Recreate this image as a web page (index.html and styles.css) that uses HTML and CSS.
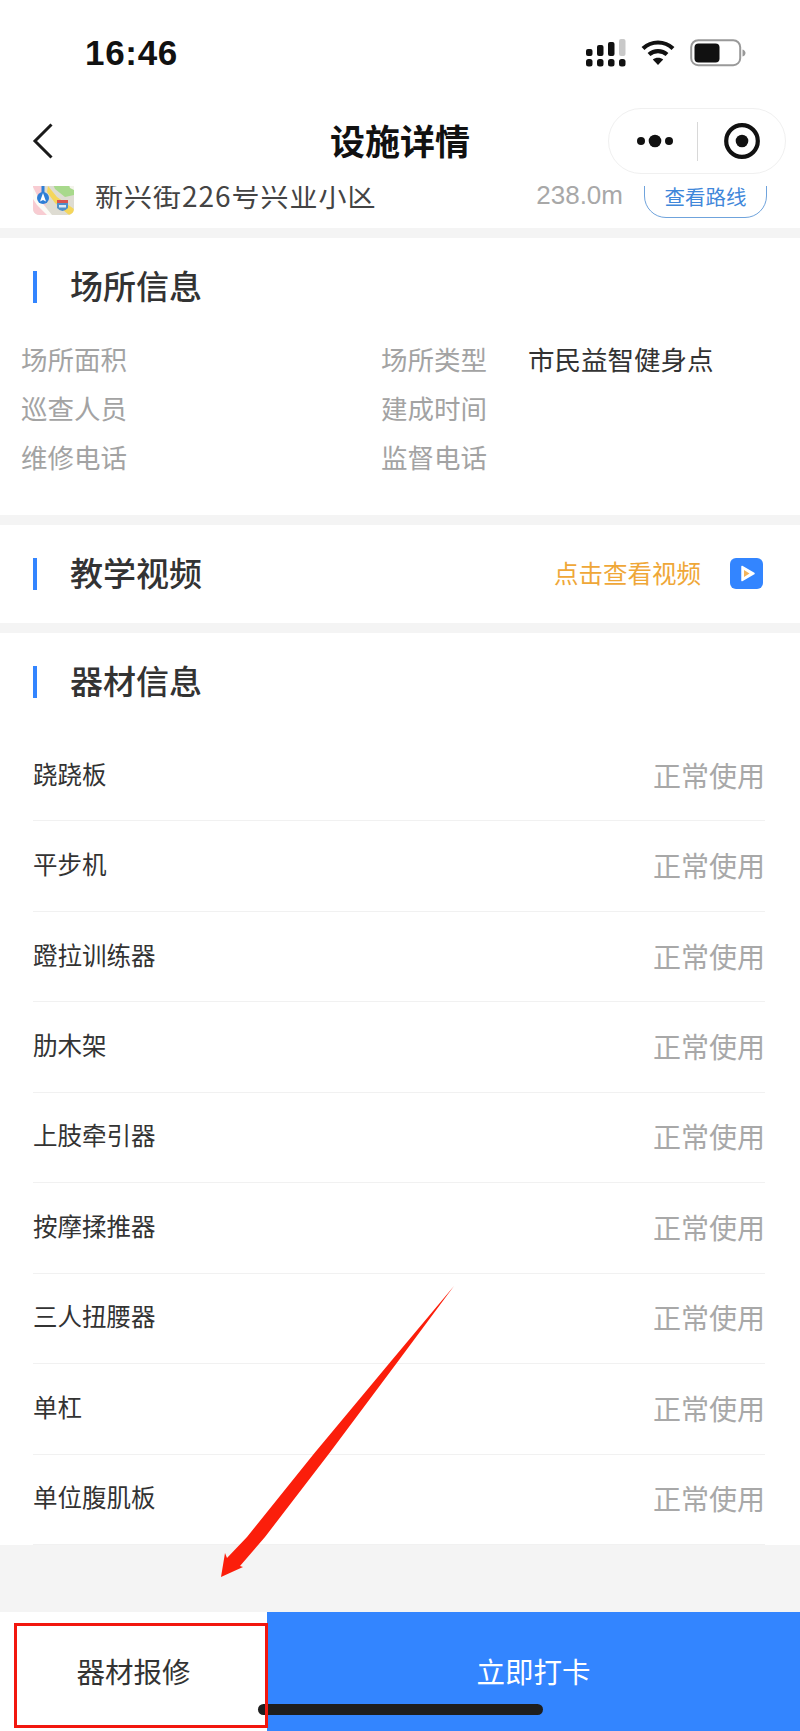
FILE: index.html
```html
<!DOCTYPE html>
<html lang="zh">
<head>
<meta charset="utf-8">
<title>设施详情</title>
<link rel="stylesheet" href="styles.css">
</head>
<body>
<div class="page">
  <header class="top">
    <div class="status">
      <span class="time">16:46</span>
      <div class="status-icons">
        <svg class="signal" width="40" height="28" viewBox="0 0 40 28"><g fill="#111"><rect x="0" y="10" width="6.500" height="7" rx="2"/><rect x="11" y="6" width="6.500" height="11" rx="2"/><rect x="22" y="3" width="6.500" height="14" rx="2"/><rect x="33" y="0" width="6.500" height="17" rx="2" fill="#c9c9c9"/><rect x="0" y="20" width="6.500" height="7.500" rx="2.500"/><rect x="11" y="20" width="6.500" height="7.500" rx="2.500"/><rect x="22" y="20" width="6.500" height="7.500" rx="2.500"/><rect x="33" y="20" width="6.500" height="7.500" rx="2.500"/></g></svg>
        <svg class="wifi" width="34" height="26" viewBox="0 0 34 26"><g fill="none" stroke="#111" stroke-width="4.200"><path d="M2 9.500C10.500 1.500 23.500 1.500 32 9.500"/><path d="M8 15.500C13 11 21 11 26 15.500"/></g><path d="M11.800 20.500C14.500 18 19.500 18 22.200 20.500L17 26Z" fill="#111"/></svg>
        <svg class="battery" width="56" height="28" viewBox="0 0 56 28"><rect x="1.200" y="1.200" width="49" height="25" rx="7" fill="#fff" stroke="#999" stroke-width="2"/><rect x="4.500" y="4.500" width="25" height="19" rx="4" fill="#111"/><path d="M52.500 10.500C54.500 11 55.500 12.500 55.500 14C55.500 15.500 54.500 17 52.500 17.500Z" fill="#999"/></svg>
      </div>
    </div>
    <nav class="nav">
      <svg class="back" width="22" height="36" viewBox="0 0 22 36"><path d="M19.500 1.500L3 18L19.500 34.500" fill="none" stroke="#1a1a1a" stroke-width="3"/></svg>
      <h1 class="nav-title">设施详情</h1>
      <div class="capsule">
        <svg width="38" height="14" viewBox="0 0 38 14"><g fill="#111"><circle cx="5" cy="7" r="4"/><circle cx="19" cy="7" r="6.300"/><circle cx="33" cy="7" r="4"/></g></svg>
        <span class="capsule-line"></span>
        <svg width="38" height="38" viewBox="0 0 38 38"><circle cx="19" cy="19" r="15.800" fill="none" stroke="#111" stroke-width="4.200"/><circle cx="19" cy="19" r="6.300" fill="#111"/></svg>
      </div>
    </nav>
  </header>

  <div class="address">
    <svg class="map-icon" width="41" height="40" viewBox="0 0 41 40">
      <defs><clipPath id="mapclip"><path d="M0 0H41V33Q41 40 34 40H7Q0 40 0 33Z"/></clipPath></defs>
      <g clip-path="url(#mapclip)">
        <rect width="41" height="40" fill="#dedcd2"/>
        <path d="M0 0H6L15 40H0Z" fill="#f8ccd2"/>
        <path d="M16 0H41V20L32 22L22 14Z" fill="#a8d98c"/>
        <path d="M33 0H41V15L37 13Z" fill="#f4f4ec"/>
        <path d="M0 12L6 24L19 40H14L4 30L0 24Z" fill="#fbfbf6"/>
        <path d="M15 11L24 22L41 34V40H36L22 28L14 17Z" fill="#f5d65b"/>
        <rect x="8.500" y="0" width="3" height="20" fill="#2f7fd6"/>
        <circle cx="10" cy="23" r="6" fill="#2f7fd6"/>
        <path d="M10 18L13 26.500L10 25L7 26.500Z" fill="#fff"/>
        <path d="M24 25H35V33Q29.500 39 24 33Z" fill="#4f8fc9"/>
        <rect x="24" y="25" width="11" height="3" fill="#d9534f"/>
        <rect x="26" y="30" width="7" height="2.500" fill="#dfeaf5"/>
      </g>
    </svg>
    <span class="addr-text">新兴街226号兴业小区</span>
    <span class="distance">238.0m</span>
    <span class="route-btn">查看路线</span>
  </div>

  <section class="block info">
    <div class="block-head"><i class="bar"></i><h2 class="block-title">场所信息</h2></div>
    <dl class="info-grid">
      <div class="info-cell"><dt>场所面积</dt><dd></dd></div>
      <div class="info-cell"><dt>场所类型</dt><dd>市民益智健身点</dd></div>
      <div class="info-cell"><dt>巡查人员</dt><dd></dd></div>
      <div class="info-cell"><dt>建成时间</dt><dd></dd></div>
      <div class="info-cell"><dt>维修电话</dt><dd></dd></div>
      <div class="info-cell"><dt>监督电话</dt><dd></dd></div>
    </dl>
  </section>

  <section class="block video">
    <div class="block-head"><i class="bar"></i><h2 class="block-title">教学视频</h2></div>
    <div class="video-link">
      <span class="video-text">点击查看视频</span>
      <svg width="33" height="31" viewBox="0 0 33 31"><rect width="33" height="31" rx="6" fill="#3385ff"/><path d="M12 8.500L24 15.500L12 22.500Z" fill="#fff" stroke="#fff" stroke-width="1.500" stroke-linejoin="round"/><path d="M14 12L19.500 15.500L14 19Z" fill="#f3b35a"/></svg>
    </div>
  </section>

  <section class="block gear">
    <div class="block-head"><i class="bar"></i><h2 class="block-title">器材信息</h2></div>
    <ul class="gear-list">
      <li class="gear-row"><span class="gear-name">跷跷板</span><span class="gear-state">正常使用</span></li>
      <li class="gear-row"><span class="gear-name">平步机</span><span class="gear-state">正常使用</span></li>
      <li class="gear-row"><span class="gear-name">蹬拉训练器</span><span class="gear-state">正常使用</span></li>
      <li class="gear-row"><span class="gear-name">肋木架</span><span class="gear-state">正常使用</span></li>
      <li class="gear-row"><span class="gear-name">上肢牵引器</span><span class="gear-state">正常使用</span></li>
      <li class="gear-row"><span class="gear-name">按摩揉推器</span><span class="gear-state">正常使用</span></li>
      <li class="gear-row"><span class="gear-name">三人扭腰器</span><span class="gear-state">正常使用</span></li>
      <li class="gear-row"><span class="gear-name">单杠</span><span class="gear-state">正常使用</span></li>
      <li class="gear-row"><span class="gear-name">单位腹肌板</span><span class="gear-state">正常使用</span></li>
    </ul>
  </section>

  <div class="spacer"></div>

  <footer class="actions">
    <div class="act-repair">器材报修</div>
    <div class="act-check">立即打卡</div>
  </footer>

  <div class="home-bar"></div>
  <div class="mark-box"></div>
  <svg class="mark-arrow" width="800" height="1731" viewBox="0 0 800 1731"><path d="M454 1286L399 1360L329.500 1453L265 1537L240 1566L243 1567L221 1577L225 1553L227 1558L247 1537L314.500 1453L392 1360Z" fill="#fb1e0b"/></svg>
</div>
</body>
</html>
```
FILE: styles.css
```css
* { box-sizing: border-box; }
html, body { margin: 0; padding: 0; }
body { background: #fff; font-family: "Noto Sans CJK SC", "Liberation Sans", sans-serif; color: #333; }
h1, h2, dl, dd, dt, ul { margin: 0; padding: 0; font-weight: inherit; }
ul { list-style: none; }

.page { position: relative; width: 800px; height: 1731px; overflow: hidden; display: flex; flex-direction: column; background: #f4f4f4; }

.top { background: #fff; height: 186px; flex: none; }
.status { height: 108px; display: flex; align-items: flex-start; justify-content: space-between; padding: 35px 54px 0 85px; }
.time { font-family: "Liberation Sans", sans-serif; font-weight: 700; font-size: 35px; line-height: 36px; letter-spacing: 0.7px; color: #111; }
.status-icons { display: flex; align-items: flex-start; padding-top: 4px; }
.wifi { margin-left: 15px; }
.battery { margin-left: 15px; }

.nav { position: relative; height: 66px; display: flex; align-items: center; justify-content: space-between; padding: 0 14px 0 32px; }
.nav-title { position: absolute; left: 0; right: 0; margin-top: -2px; text-align: center; font-size: 35px; line-height: 44px; font-weight: 700; color: #111; }
.capsule { width: 178px; height: 66px; border: 1px solid #f0f0f0; border-radius: 33px; background: #fff; display: flex; align-items: center; padding-left: 27px; }
.capsule-line { width: 1px; height: 39px; background: #d8d8d8; margin-left: 23px; margin-right: 25px; }

.address { flex: none; height: 42px; background: #fff; overflow: hidden; display: flex; align-items: flex-end; padding: 0 33px; }
.map-icon { flex: none; margin-bottom: 13px; }
.addr-text { margin-left: 21px; font-size: 28px; line-height: 36px; letter-spacing: 1px; margin-bottom: 15px; color: #444; }
.distance { margin-left: auto; font-family: "Liberation Sans", sans-serif; font-size: 26px; line-height: 36px; margin-bottom: 15px; color: #a8a8a8; }
.route-btn { margin-left: 21px; width: 123px; height: 62px; border: 1px solid #6fa3dc; border-radius: 22px; margin-bottom: 10px; display: flex; align-items: flex-end; justify-content: center; padding-bottom: 3px; font-size: 20.500px; line-height: 36px; color: #3f87da; background: #fff; }

.block { background: #fff; margin-top: 10px; flex: none; padding-top: 33px; }
.info { height: 277px; }
.video { height: 98px; position: relative; }
.block-head { display: flex; align-items: center; padding-left: 33px; height: 32px; }
.bar { display: block; width: 4px; height: 32px; background: #3385ff; }
.block-title { margin-left: 33px; margin-bottom: 4px; font-size: 33px; line-height: 44px; font-weight: 500; color: #333; }

.info-grid { display: grid; grid-template-columns: 360px 1fr; grid-auto-rows: 49px; padding-left: 21px; margin-top: 31px; }
.info-cell { display: flex; align-items: center; font-size: 26.500px; line-height: 49px; }
.info-cell dt { width: 147px; flex: none; color: #a3a3a3; }
.info-cell dd { color: #333; }

.video-link { position: absolute; right: 37px; top: 33px; height: 31px; display: flex; align-items: center; }
.video-text { font-size: 24.500px; line-height: 32px; color: #efa738; margin-right: 29px; margin-bottom: 2px; }

.gear-list { margin: 33px 35px 0 33px; }
.gear-row { height: 90.440px; border-bottom: 1px solid #f1f1f1; display: flex; align-items: center; justify-content: space-between; }
.gear-name { font-size: 24.500px; line-height: 34px; color: #333; margin-bottom: 4px; }
.gear-state { font-size: 28px; line-height: 36px; color: #a8a8a8; margin-bottom: 2px; }

.spacer { flex: 1; }

.actions { flex: none; height: 119px; display: flex; }
.act-repair { width: 267px; background: #fff; display: flex; align-items: center; justify-content: center; font-size: 28.500px; color: #333; padding-bottom: 3px; }
.act-check { flex: 1; background: #3385ff; display: flex; align-items: center; justify-content: center; font-size: 28.500px; color: #fff; padding-bottom: 3px; }

.home-bar { position: absolute; left: 258px; top: 1704px; width: 285px; height: 11px; border-radius: 6px; background: #1e1e1e; }
.mark-box { position: absolute; left: 14px; top: 1623px; width: 254px; height: 105px; border: 3px solid #f2170f; }
.mark-arrow { position: absolute; left: 0; top: 0; pointer-events: none; }
```
